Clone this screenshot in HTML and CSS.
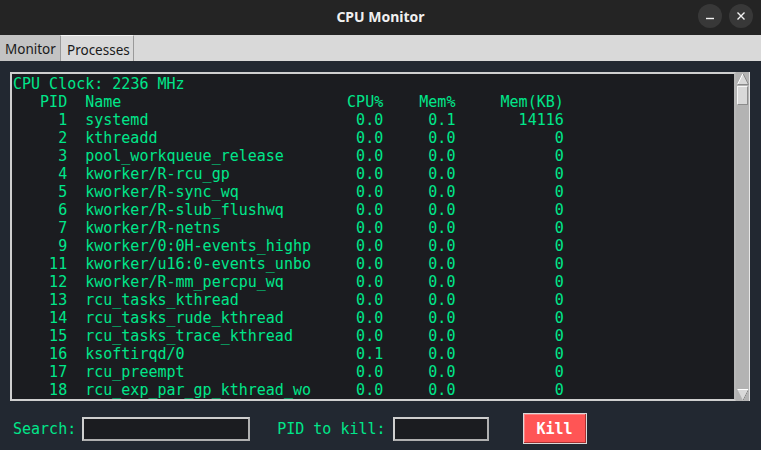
FILE: index.html
```html
<!DOCTYPE html>
<html>
<head>
<meta charset="utf-8">
<title>CPU Monitor</title>
<link rel="stylesheet" href="styles.css">
</head>
<body>
<div class="window">
  <header class="titlebar">
    <span></span>
    <span class="title">CPU Monitor</span>
    <div class="wbtns">
      <span class="wbtn"><svg width="12" height="12" viewBox="0 0 12 12"><path d="M2 8.5h8" stroke="#f2f2f2" stroke-width="1.4"/></svg></span>
      <span class="wbtn"><svg width="12" height="12" viewBox="0 0 12 12"><path d="M2.5 2.5l7 7M9.5 2.5l-7 7" stroke="#f2f2f2" stroke-width="1.4"/></svg></span>
    </div>
  </header>
  <nav class="tabs">
    <div class="tab">Monitor</div>
    <div class="tab active">Processes</div>
  </nav>
  <main class="content">
    <div class="textframe">
      <div class="text">
        <div class="line">CPU Clock: 2236 MHz</div>
        <div class="row"><span class="r">PID</span><span>Name</span><span class="r">CPU%</span><span class="r">Mem%</span><span class="r">Mem(KB)</span></div>
        <div class="row"><span class="r">1</span><span>systemd</span><span class="r">0.0</span><span class="r">0.1</span><span class="r">14116</span></div>
        <div class="row"><span class="r">2</span><span>kthreadd</span><span class="r">0.0</span><span class="r">0.0</span><span class="r">0</span></div>
        <div class="row"><span class="r">3</span><span>pool_workqueue_release</span><span class="r">0.0</span><span class="r">0.0</span><span class="r">0</span></div>
        <div class="row"><span class="r">4</span><span>kworker/R-rcu_gp</span><span class="r">0.0</span><span class="r">0.0</span><span class="r">0</span></div>
        <div class="row"><span class="r">5</span><span>kworker/R-sync_wq</span><span class="r">0.0</span><span class="r">0.0</span><span class="r">0</span></div>
        <div class="row"><span class="r">6</span><span>kworker/R-slub_flushwq</span><span class="r">0.0</span><span class="r">0.0</span><span class="r">0</span></div>
        <div class="row"><span class="r">7</span><span>kworker/R-netns</span><span class="r">0.0</span><span class="r">0.0</span><span class="r">0</span></div>
        <div class="row"><span class="r">9</span><span>kworker/0:0H-events_highp</span><span class="r">0.0</span><span class="r">0.0</span><span class="r">0</span></div>
        <div class="row"><span class="r">11</span><span>kworker/u16:0-events_unbo</span><span class="r">0.0</span><span class="r">0.0</span><span class="r">0</span></div>
        <div class="row"><span class="r">12</span><span>kworker/R-mm_percpu_wq</span><span class="r">0.0</span><span class="r">0.0</span><span class="r">0</span></div>
        <div class="row"><span class="r">13</span><span>rcu_tasks_kthread</span><span class="r">0.0</span><span class="r">0.0</span><span class="r">0</span></div>
        <div class="row"><span class="r">14</span><span>rcu_tasks_rude_kthread</span><span class="r">0.0</span><span class="r">0.0</span><span class="r">0</span></div>
        <div class="row"><span class="r">15</span><span>rcu_tasks_trace_kthread</span><span class="r">0.0</span><span class="r">0.0</span><span class="r">0</span></div>
        <div class="row"><span class="r">16</span><span>ksoftirqd/0</span><span class="r">0.1</span><span class="r">0.0</span><span class="r">0</span></div>
        <div class="row"><span class="r">17</span><span>rcu_preempt</span><span class="r">0.0</span><span class="r">0.0</span><span class="r">0</span></div>
        <div class="row"><span class="r">18</span><span>rcu_exp_par_gp_kthread_wo</span><span class="r">0.0</span><span class="r">0.0</span><span class="r">0</span></div>
      </div>
      <div class="scrollbar">
        <div class="arrow"><svg width="12" height="12" viewBox="0 0 12 12"><polygon points="6,0.5 11.5,11.5 0.5,11.5" fill="#d9d9d9"/><path d="M6 0.5L0.5 11.5" stroke="#ffffff" stroke-width="1"/><path d="M6 0.5L11.5 11.5H0.5" stroke="#8a8a8a" stroke-width="1" fill="none"/></svg></div>
        <div class="thumb"></div>
        <div class="trough"></div>
        <div class="arrow"><svg width="12" height="12" viewBox="0 0 12 12"><polygon points="0.5,0.5 11.5,0.5 6,11.5" fill="#d9d9d9"/><path d="M0.5 0.5H11.5L6 11.5" stroke="#ffffff" stroke-width="1" fill="none"/><path d="M11.5 0.5L6 11.5" stroke="#8a8a8a" stroke-width="1"/></svg></div>
      </div>
    </div>
    <div class="controls">
      <label class="lbl">Search:</label>
      <span class="entry search"></span>
      <label class="lbl pidlbl">PID to kill:</label>
      <span class="entry pid"></span>
      <button class="kill">Kill</button>
    </div>
  </main>
</div>
</body>
</html>
```
FILE: styles.css
```css
html, body {
  margin: 0;
  padding: 0;
  background: #222831;
}
.window {
  width: 761px;
  height: 450px;
  display: flex;
  flex-direction: column;
  overflow: hidden;
}
.titlebar {
  height: 35px;
  flex: none;
  background: #242424;
  display: grid;
  grid-template-columns: 1fr auto 1fr;
  align-items: center;
}
.title {
  font-family: "Noto Sans", "DejaVu Sans", sans-serif;
  font-weight: bold;
  font-size: 14px;
  color: #f0f0f0;
  padding-bottom: 2px;
}
.wbtns {
  justify-self: end;
  display: flex;
  gap: 7px;
  padding-right: 8px;
  padding-bottom: 3px;
}
.wbtn {
  width: 24px;
  height: 24px;
  border-radius: 50%;
  background: #383838;
  display: flex;
  align-items: center;
  justify-content: center;
}
.tabs {
  height: 26px;
  flex: none;
  background: #d9d9d9;
  display: flex;
  align-items: stretch;
}
.tab {
  font-family: "Noto Sans", "DejaVu Sans", sans-serif;
  font-size: 13.5px;
  color: #1a1a1a;
  display: flex;
  align-items: center;
  padding: 2px 4px 0 5px;
  box-sizing: border-box;
}
.tab:first-child {
  width: 60px;
  background: #c3c3c3;
}
.tab.active {
  width: 74px;
  background: #d9d9d9;
  border-left: 1px solid #9a9a9a;
  border-right: 1px solid #9a9a9a;
  border-top: 1px solid #f4f4f4;
  padding-left: 6px;
}
.content {
  flex: 1;
  background: #222831;
  padding: 11px 11px 0 10px;
  display: flex;
  flex-direction: column;
}
.textframe {
  height: 329px;
  display: flex;
}
.text {
  flex: 1;
  background: #1b1c20;
  border: 2px solid #cfcfcf;
  border-right-color: #b8b8b8;
  padding: 1px 1px 0 1px;
  font-family: "DejaVu Sans Mono", monospace;
  font-size: 15px;
  line-height: 18px;
  color: #00e68a;
  white-space: nowrap;
  overflow: hidden;
}
.line {
  height: 18px;
}
.row {
  height: 18px;
  display: grid;
  grid-template-columns: 6ch 25ch 6ch 6ch 10ch;
  column-gap: 2ch;
}
.r {
  text-align: right;
}
.scrollbar {
  width: 13px;
  background: #b3b3b3;
  border-right: 1px solid #e6e6e6;
  display: flex;
  flex-direction: column;
  align-items: center;
}
.arrow {
  height: 13px;
  display: flex;
  align-items: center;
  justify-content: center;
}
.thumb {
  width: 11px;
  height: 19px;
  margin-top: 1px;
  background: #d9d9d9;
  border-top: 1px solid #f6f6f6;
  border-left: 1px solid #f6f6f6;
  border-bottom: 1px solid #8c8c8c;
  border-right: 1px solid #8c8c8c;
  box-sizing: border-box;
}
.trough {
  flex: 1;
}
.controls {
  display: flex;
  align-items: center;
  height: 33px;
  padding-top: 11px;
  padding-left: 3px;
}
.lbl {
  font-family: "DejaVu Sans Mono", monospace;
  font-size: 15px;
  color: #00e68a;
}
.entry {
  height: 24px;
  box-sizing: border-box;
  background: #1b1c20;
  border: 2px solid #cfcfcf;
  border-right-color: #b0b0b0;
  border-bottom-color: #b0b0b0;
}
.search {
  width: 168px;
  margin-left: 6px;
}
.pidlbl {
  margin-left: 27px;
}
.pid {
  width: 96px;
  margin-left: 7px;
}
.kill {
  margin-left: 34px;
  width: 64px;
  height: 31px;
  background: #ff5555;
  border: 1px solid #d9d9d9;
  box-shadow: inset -1px -1px 0 #a83030, inset 1px 1px 0 #ff8080;
  font-family: "DejaVu Sans Mono", monospace;
  font-weight: bold;
  font-size: 15px;
  color: #ffffff;
  padding: 0;
}
```
